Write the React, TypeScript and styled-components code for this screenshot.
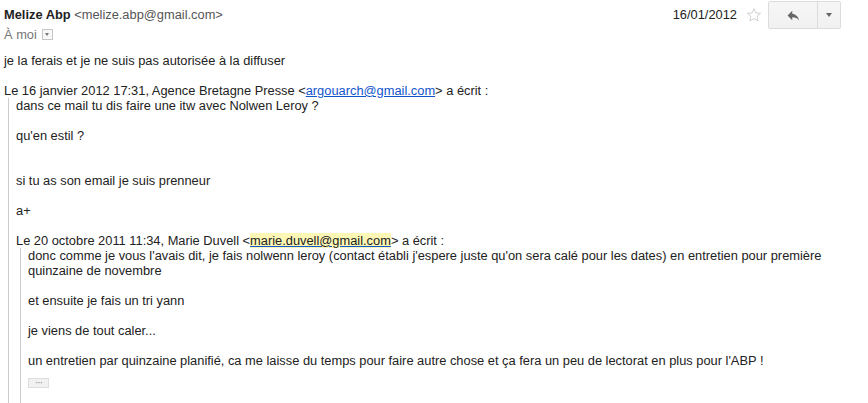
import styled, { createGlobalStyle } from 'styled-components';

const GlobalStyle = createGlobalStyle`
  html, body {
    margin: 0;
    padding: 0;
    background: #fff;
  }
  body {
    font-family: "Liberation Sans", Arial, sans-serif;
    font-size: 12.85px;
    color: #222;
  }
`;

const Page = styled.div`
  width: 868px;
  height: 403px;
  overflow: hidden;
  padding-left: 4px;
  box-sizing: border-box;
  line-height: 15px;
`;

const Header = styled.div`
  display: flex;
  justify-content: space-between;
  align-items: flex-start;
  padding-top: 1px;
  padding-right: 27px;
`;

const Sender = styled.div`
  display: flex;
  flex-direction: column;
  padding-top: 6px;
`;

const NameRow = styled.div`
  white-space: nowrap;
`;

const Name = styled.span`
  font-weight: bold;
  color: #222;
`;

const Address = styled.span`
  color: #555;
`;

const ToRow = styled.div`
  display: flex;
  align-items: center;
  gap: 5px;
  margin-top: 5px;
  color: #777;
`;

const MiniDrop = styled.span`
  display: inline-flex;
  align-items: center;
  justify-content: center;
  width: 9px;
  height: 9px;
  border: 1px solid #c6c6c6;
  background: #f8f8f8;
  &::after {
    content: '';
    border-left: 2.5px solid transparent;
    border-right: 2.5px solid transparent;
    border-top: 3px solid #777;
  }
`;

const Actions = styled.div`
  display: flex;
  align-items: flex-start;
`;

const DateText = styled.span`
  margin-top: 6px;
  margin-right: 9px;
  color: #222;
`;

const Star = styled.span`
  display: inline-flex;
  margin-top: 6px;
  margin-right: 6px;
`;

const ButtonGroup = styled.div`
  display: flex;
  height: 26px;
  border: 1px solid #dcdcdc;
  border-radius: 2px;
  background: linear-gradient(#f6f6f6, #f1f1f1);
`;

const GroupButton = styled.div<{ $w: number; $divider?: boolean }>`
  display: flex;
  align-items: center;
  justify-content: center;
  width: ${(p) => p.$w}px;
  border-right: ${(p) => (p.$divider ? '1px solid #dcdcdc' : 'none')};
`;

const Caret = styled.span`
  border-left: 3px solid transparent;
  border-right: 3px solid transparent;
  border-top: 4px solid #666;
`;

const Body = styled.div`
  margin-top: 11px;
`;

const Quote = styled.div`
  margin: 0 0 0 4px;
  border-left: 1px solid #ccc;
  padding-left: 7px;
  min-height: 400px;
`;

const Link = styled.a<{ $hl?: boolean }>`
  color: ${(p) => (p.$hl ? '#222' : '#15c')};
  text-decoration: underline;
  text-decoration-color: #15c;
  background: ${(p) => (p.$hl ? '#fdf7b6' : 'transparent')};
`;

const More = styled.div`
  display: flex;
  align-items: center;
  justify-content: center;
  margin-top: 10px;
  width: 19px;
  height: 8px;
  border: 1px solid #ddd;
  background: #f1f1f1;
  color: #888;
  font-size: 10px;
  line-height: 8px;
  letter-spacing: -1px;
`;

const StarIcon = () => (
  <svg width="16" height="16" viewBox="0 0 24 24">
    <path
      d="M12 2.5l2.9 6.3 6.9.7-5.2 4.6 1.5 6.8L12 17.4l-6.1 3.5 1.5-6.8-5.2-4.6 6.9-.7z"
      fill="none"
      stroke="#c8c8c8"
      strokeWidth="1.3"
      strokeLinejoin="round"
    />
  </svg>
);

const ReplyIcon = () => (
  <svg width="15" height="15" viewBox="0 0 24 24">
    <path d="M10 9V4.5L2.5 12l7.5 7.5V14.9c5 0 8.5 1.6 11 5.1-1-5-4-10-11-11z" fill="#666" />
  </svg>
);

export default function App() {
  return (
    <>
      <GlobalStyle />
      <Page>
        <Header>
          <Sender>
            <NameRow>
              <Name>Melize Abp</Name> <Address>&lt;melize.abp@gmail.com&gt;</Address>
            </NameRow>
            <ToRow>
              À moi <MiniDrop />
            </ToRow>
          </Sender>
          <Actions>
            <DateText>16/01/2012</DateText>
            <Star>
              <StarIcon />
            </Star>
            <ButtonGroup>
              <GroupButton $w={48} $divider>
                <ReplyIcon />
              </GroupButton>
              <GroupButton $w={22}>
                <Caret />
              </GroupButton>
            </ButtonGroup>
          </Actions>
        </Header>
        <Body>
          je la ferais et je ne suis pas autorisée à la diffuser
          <br />
          <br />
          <div>
            Le 16 janvier 2012 17:31, Agence Bretagne Presse &lt;
            <Link href="#">argouarch@gmail.com</Link>&gt; a écrit :
            <Quote>
              dans ce mail tu dis faire une itw avec Nolwen Leroy ?
              <br />
              <br />
              qu'en estil ?
              <br />
              <br />
              <br />
              si tu as son email je suis prenneur
              <br />
              <br />
              a+
              <br />
              <br />
              Le 20 octobre 2011 11:34, Marie Duvell &lt;
              <Link href="#" $hl>
                marie.duvell@gmail.com
              </Link>
              &gt; a écrit :
              <Quote>
                donc comme je vous l'avais dit, je fais nolwenn leroy (contact établi j'espere juste qu'on sera calé pour les dates) en entretien pour première
                <br />
                quinzaine de novembre
                <br />
                <br />
                et ensuite je fais un tri yann
                <br />
                <br />
                je viens de tout caler...
                <br />
                <br />
                un entretien par quinzaine planifié, ca me laisse du temps pour faire autre chose et ça fera un peu de lectorat en plus pour l'ABP !
                <More>···</More>
              </Quote>
            </Quote>
          </div>
        </Body>
      </Page>
    </>
  );
}
